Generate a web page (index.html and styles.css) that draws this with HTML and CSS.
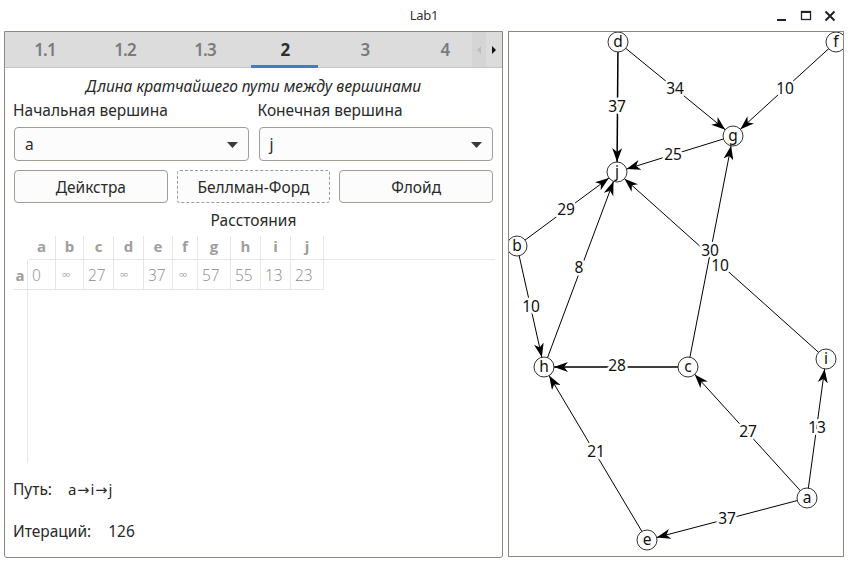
FILE: index.html
```html
<!DOCTYPE html>
<html>
<head>
<meta charset="utf-8">
<link rel="stylesheet" href="styles.css">
</head>
<body>
<div class="titlebar">
  <span class="title">Lab1</span>
  <div class="controls">
    <svg width="12" height="12" viewBox="0 0 12 12"><rect x="1" y="9" width="9" height="2" fill="#222"/></svg>
    <svg width="12" height="12" viewBox="0 0 12 12"><rect x="1.5" y="1.5" width="9" height="8" fill="none" stroke="#222" stroke-width="1.3"/><rect x="1.5" y="1.5" width="9" height="1.5" fill="#222"/></svg>
    <svg width="12" height="12" viewBox="0 0 12 12"><path d="M1.5 1.5 L10.5 10.5 M10.5 1.5 L1.5 10.5" stroke="#222" stroke-width="2"/></svg>
  </div>
</div>
<div class="main">
  <div class="left">
    <div class="tabbar">
      <div class="tab">1.1</div>
      <div class="tab">1.2</div>
      <div class="tab">1.3</div>
      <div class="tab active">2</div>
      <div class="tab">3</div>
      <div class="tab">4</div>
      <div class="scroll">
        <svg width="6" height="10" viewBox="0 0 6 10"><path d="M5 1 L1 5 L5 9 Z" fill="#bdbdbd"/></svg>
        <svg width="6" height="10" viewBox="0 0 6 10"><path d="M1 1 L5 5 L1 9 Z" fill="#111"/></svg>
      </div>
    </div>
    <div class="content">
      <div class="heading">Длина кратчайшего пути между вершинами</div>
      <div class="pair">
        <div class="lbl">Начальная вершина</div>
        <div class="lbl">Конечная вершина</div>
        <div class="combo"><span>a</span><svg width="11" height="6" viewBox="0 0 11 6"><path d="M0 0 L11 0 L5.5 6 Z" fill="#3a3a3a"/></svg></div>
        <div class="combo"><span>j</span><svg width="11" height="6" viewBox="0 0 11 6"><path d="M0 0 L11 0 L5.5 6 Z" fill="#3a3a3a"/></svg></div>
      </div>
      <div class="buttons">
        <div class="btn">Дейкстра</div>
        <div class="btn focus">Беллман-Форд</div>
        <div class="btn">Флойд</div>
      </div>
      <div class="caption">Расстояния</div>
      <div class="tbl">
        <div class="corner"></div>
        <div class="th">a</div><div class="th">b</div><div class="th">c</div><div class="th">d</div><div class="th">e</div><div class="th">f</div><div class="th">g</div><div class="th">h</div><div class="th">i</div><div class="th">j</div>
        <div class="th fill"></div>
        <div class="rh">a</div>
        <div class="td">0</div><div class="td inf">∞</div><div class="td">27</div><div class="td inf">∞</div><div class="td">37</div><div class="td inf">∞</div><div class="td">57</div><div class="td">55</div><div class="td">13</div><div class="td">23</div>
        <div class="tdfill"></div>
        <div class="rest"></div>
      </div>
      <div class="info"><span class="key">Путь:</span><span class="val path">a<span class="arw">→</span>i<span class="arw">→</span>j</span></div>
      <div class="info second"><span class="key">Итераций:</span><span class="val">126</span></div>
    </div>
  </div>
  <div class="canvas">
    <svg class="graph" width="336" height="526" viewBox="508 31 336 526">
      <defs>
        <marker id="arr" markerUnits="userSpaceOnUse" viewBox="0 0 14 10" markerWidth="14" markerHeight="10" refX="24" refY="5" orient="auto">
          <path d="M0 0 L14 5 L0 10 L4 5 Z" fill="#000"/>
        </marker>
      </defs>
      <g class="edges" stroke="#000" stroke-width="1" marker-end="url(#arr)">
        <line x1="618" y1="42" x2="617" y2="172" stroke-width="1.5"/>
        <line x1="618" y1="42" x2="733" y2="136"/>
        <line x1="836" y1="42" x2="733" y2="136"/>
        <line x1="733" y1="136" x2="617" y2="172"/>
        <line x1="517" y1="246" x2="617" y2="172"/>
        <line x1="544" y1="367" x2="617" y2="172"/>
        <line x1="688" y1="367" x2="733" y2="136"/>
        <line x1="826" y1="359" x2="617" y2="172"/>
        <line x1="517" y1="246" x2="544" y2="367"/>
        <line x1="688" y1="367" x2="544" y2="367" stroke-width="1.5"/>
        <line x1="807" y1="498" x2="688" y2="367"/>
        <line x1="807" y1="498" x2="826" y2="359"/>
        <line x1="647" y1="540" x2="544" y2="367"/>
        <line x1="807" y1="498" x2="647" y2="540"/>
      </g>
      <g class="wlabels">
        <text x="617" y="112">37</text>
        <text x="675" y="94">34</text>
        <text x="785" y="94">10</text>
        <text x="673" y="160">25</text>
        <text x="566" y="215">29</text>
        <text x="579" y="273">8</text>
        <text x="710" y="256">30</text>
        <text x="720" y="271">10</text>
        <text x="531" y="312">10</text>
        <text x="617" y="371">28</text>
        <text x="748" y="437">27</text>
        <text x="817" y="433">13</text>
        <text x="596" y="457">21</text>
        <text x="727" y="524">37</text>
      </g>
      <g class="nodes">
        <circle cx="618" cy="42" r="10"/><text x="618" y="47">d</text>
        <circle cx="836" cy="42" r="10"/><text x="836" y="47">f</text>
        <circle cx="733" cy="136" r="10"/><text x="733" y="141">g</text>
        <circle cx="617" cy="172" r="10"/><text x="617" y="177">j</text>
        <circle cx="517" cy="246" r="10"/><text x="517" y="251">b</text>
        <circle cx="544" cy="367" r="10"/><text x="544" y="372">h</text>
        <circle cx="688" cy="367" r="10"/><text x="688" y="372">c</text>
        <circle cx="826" cy="359" r="10"/><text x="826" y="364">i</text>
        <circle cx="807" cy="498" r="10"/><text x="807" y="503">a</text>
        <circle cx="647" cy="540" r="10"/><text x="647" y="545">e</text>
      </g>
    </svg>
  </div>
</div>
</body>
</html>
```
FILE: styles.css
```css
* { box-sizing: border-box; }
html, body { margin: 0; padding: 0; }
body {
  width: 848px;
  height: 561px;
  background: #ffffff;
  font-family: "Noto Sans", "Open Sans", sans-serif;
  color: #2a2a2a;
  overflow: hidden;
}
.titlebar {
  height: 31px;
  position: relative;
  display: flex;
  align-items: center;
  justify-content: center;
}
.title {
  font-size: 13px;
  color: #333;
  letter-spacing: -0.3px;
  margin-top: -2px;
}
.controls {
  position: absolute;
  right: 12px;
  top: 10px;
  display: flex;
  gap: 12px;
}
.controls svg { display: block; }
.main {
  display: flex;
  padding-left: 4px;
  gap: 5px;
}
.left {
  width: 499px;
  height: 527px;
  border: 1px solid #8e8882;
  border-radius: 0 0 3px 3px;
  display: flex;
  flex-direction: column;
}
.tabbar {
  height: 36px;
  background: #dcdcdc;
  border-bottom: 1px solid #c4c4c4;
  display: flex;
  align-items: stretch;
  position: relative;
  padding-left: 0;
}
.tab {
  width: 80px;
  flex-shrink: 0;
  display: flex;
  align-items: center;
  justify-content: center;
  font-size: 17px;
  font-weight: 600;
  color: #7b7b7b;
  position: relative;
  letter-spacing: -0.8px;
}
.tab.active { color: #2e2e2e; font-weight: 700; }
.tab.active::after {
  content: "";
  position: absolute;
  left: 6px;
  right: 7px;
  bottom: -1px;
  height: 3px;
  background: #3d7dc9;
}
.scroll {
  position: absolute;
  right: 0;
  top: 0;
  bottom: 0;
  width: 30px;
  display: flex;
  align-items: center;
  justify-content: flex-end;
  gap: 9px;
  padding-right: 5px;
  background: linear-gradient(to right, #d5d5d5 0, #d5d5d5 14px, #dcdcdc 14px);
}
.scroll svg { display: block; }
.content {
  flex: 1;
  display: flex;
  flex-direction: column;
  padding: 8px 9px 0 9px;
}
.heading {
  font-style: italic;
  font-size: 15.5px;
  line-height: 20px;
  text-align: center;
  color: #2a2a2a;
}
.pair {
  display: grid;
  grid-template-columns: 1fr 1fr;
  column-gap: 10px;
  margin-top: 4px;
}
.lbl {
  font-size: 15.5px;
  line-height: 20px;
  margin-left: -1px;
  margin-bottom: 7px;
}
.combo {
  height: 34px;
  border: 1px solid #a39c95;
  border-radius: 4px;
  background: #fcfcfc;
  display: flex;
  align-items: center;
  justify-content: space-between;
  padding: 0 10px 0 10px;
  font-size: 15.5px;
}
.combo svg { display: block; margin-top: 1px; }
.buttons {
  display: grid;
  grid-template-columns: 1fr 1fr 1fr;
  column-gap: 9px;
  margin-top: 9px;
}
.btn {
  height: 33px;
  border: 1px solid #a39c95;
  border-radius: 4px;
  background: #fcfcfc;
  display: flex;
  align-items: center;
  justify-content: center;
  font-size: 15.5px;
}
.btn.focus {
  border: 1px dashed #9a9a9a;
  border-radius: 3px;
}
.caption {
  font-size: 15.5px;
  line-height: 20px;
  text-align: center;
  margin-top: 7px;
}
.tbl {
  margin-top: 2px;
  margin-left: -1px;
  margin-right: -2px;
  height: 231px;
  display: grid;
  grid-template-columns: 15px 28px 28px 30px 30px 29px 25px 33px 30px 30px 33px 1fr;
  grid-template-rows: 28px 30px 1fr;
  font-family: "Open Sans", "Noto Sans", sans-serif;
}
.th {
  border-right: 1px solid #e6e6e6;
  border-bottom: 1px solid #e6e6e6;
  display: flex;
  align-items: flex-end;
  justify-content: center;
  padding-bottom: 3px;
  font-size: 15px;
  font-weight: 700;
  color: #9e9e9e;
  margin-top: 4px;
}
.th.fill { border-right: none; }
.corner { border-right: 1px solid transparent; }
.rh {
  border-right: 1px solid #e6e6e6;
  border-bottom: 1px solid #e6e6e6;
  display: flex;
  align-items: center;
  justify-content: center;
  font-size: 15px;
  font-weight: 700;
  color: #9e9e9e;
}
.td {
  border-right: 1px solid #e6e6e6;
  border-bottom: 1px solid #e6e6e6;
  display: flex;
  align-items: center;
  padding-left: 4px;
  font-size: 15.5px;
  font-weight: 300;
  color: #8a8a8a;
}
.td.inf { font-size: 12px; padding-left: 6px; }
.tdfill { grid-column: 12; }
.rest {
  grid-column: 1;
  border-right: 1px solid #e6e6e6;
}
.info {
  font-size: 15.5px;
  line-height: 20px;
  margin-top: 16px;
  display: flex;
  margin-left: -1px;
}
.info.second { margin-top: 21px; }
.key { display: inline-block; }
.info .val { margin-left: 16px; }
.info .val.path { font-size: 15px; }
.arw { font-family: "DejaVu Sans", sans-serif; font-size: 14.5px; padding: 0 1px; }
.info.second .val { margin-left: 17px; }
.canvas {
  width: 336px;
  height: 526px;
  border: 1px solid #8e8882;
  background: #fff;
  overflow: hidden;
}
.graph { display: block; margin: -1px; }
.wlabels text {
  font-family: "Noto Sans", "Open Sans", sans-serif;
  font-size: 15.5px;
  text-anchor: middle;
  fill: #111;
  stroke: #fff;
  stroke-width: 5px;
  paint-order: stroke;
  stroke-linejoin: round;
}
.nodes circle {
  fill: #fff;
  stroke: #333;
  stroke-width: 1;
}
.nodes text {
  font-family: "Noto Sans", "Open Sans", sans-serif;
  font-size: 15.5px;
  text-anchor: middle;
  fill: #111;
}
```
